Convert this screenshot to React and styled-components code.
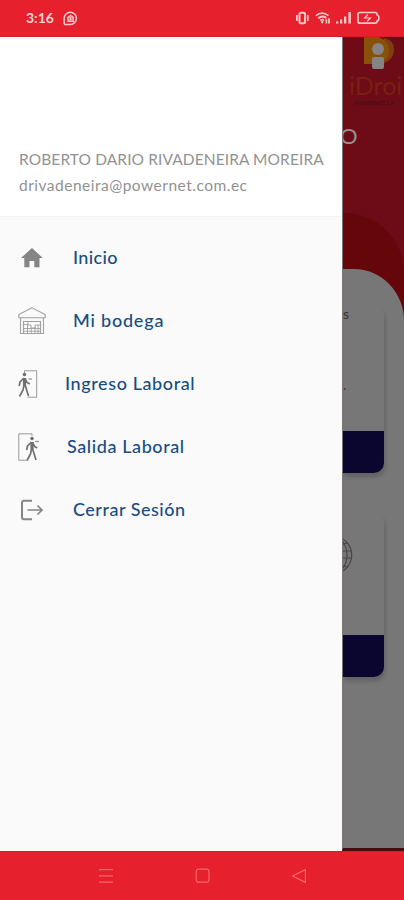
import React from 'react'
import styled, { createGlobalStyle } from 'styled-components'

const menu = [
  { label: 'Inicio', icon: <HomeIcon />, indent: 73, spacing: 0.35 },
  { label: 'Mi bodega', icon: <WarehouseIcon />, indent: 73, spacing: 0.8 },
  { label: 'Ingreso Laboral', icon: <EnterIcon />, indent: 65, spacing: 0.6 },
  { label: 'Salida Laboral', icon: <ExitIcon />, indent: 67, spacing: 0.6 },
  { label: 'Cerrar Sesión', icon: <LogoutIcon />, indent: 73, spacing: 0.5 },
]

function App() {
  return (
    <Screen>
      <GlobalStyle />
      <StatusBar />
      <Content>
        <Drawer>
          <Profile>
            <Name>ROBERTO DARIO RIVADENEIRA MOREIRA</Name>
            <Email>drivadeneira@powernet.com.ec</Email>
          </Profile>
          <Menu>
            {menu.map((item) => (
              <MenuItem key={item.label}>
                <IconBox $width={item.indent}>{item.icon}</IconBox>
                <Label $spacing={item.spacing}>{item.label}</Label>
              </MenuItem>
            ))}
          </Menu>
        </Drawer>
        <Dashboard />
      </Content>
      <NavigationBar />
    </Screen>
  )
}

function StatusBar() {
  return (
    <StatusBarStyled>
      <Clock>3:16</Clock>
      <svg width="15" height="15" viewBox="0 0 15 15" fill="none" stroke="#ffc9ca" strokeWidth="1.5">
        <path d="M1.2 13.2V7.3a6.1 6.1 0 1 1 6.1 6.1H1.2" />
        <path d="M5 10.3V6.4l2.6-2 2.5 2v3.9z" />
        <path d="M7.5 5.8v3.8" strokeWidth="2" />
      </svg>
      <StatusIcons>
        <svg width="14" height="14" viewBox="0 0 14 14" fill="none" stroke="#ffc9ca">
          <rect x="3.5" y="1.8" width="5.6" height="10.4" rx="1.5" strokeWidth="2" />
          <path d="M.9 4v6M11.8 4v6" strokeWidth="1.7" />
        </svg>
        <svg width="16" height="14" viewBox="0 0 16 14" fill="none" stroke="#ffc9ca" strokeWidth="1.8">
          <path d="M1 4.6q6-4.8 12.4 0M3.2 7.2q4.2-3.4 8.2-.2M5.3 9.4q2-1.6 3.6-.1" />
          <path d="M7.2 10v2.2" strokeWidth="2" />
          <path d="M11.4 12.5V8.2M14 7.2v5.3" strokeWidth="1.7" />
        </svg>
        <svg width="16" height="14" viewBox="0 0 16 14" fill="#ffc9ca">
          <path d="M0 10.5h2.3v2H0zM4 8.5h2.3v4H4zM8 5.5h2.3v7H8zM12.4 1h2.5v11.5h-2.5z" />
        </svg>
        <svg width="24" height="14" viewBox="0 0 24 14" fill="none" stroke="#ffc9ca" strokeWidth="1.7">
          <path d="M3 1.5h15q2 0 2 2.2 2 .7 2 3.2t-2 3.2q0 2.1-2 2.1H3q-2 0-2-2V3.5q0-2 2-2z" />
          <path d="M11 3.5 7.5 7h6L10 10.5" strokeWidth="1.1" />
        </svg>
      </StatusIcons>
    </StatusBarStyled>
  )
}

function Dashboard() {
  return (
    <DashboardStyled>
      <Hero>
        <svg width="30" height="33" viewBox="0 0 30 33">
          <path d="M0 0h18q12 3 12 12 0 11-10 14V0z" fill="#7d3f12" />
          <path d="M0 0h15q10 4 10 13t-6 11v3H0z" fill="#895108" />
          <circle cx="14" cy="12" r="6" fill="#878283" />
          <rect x="8" y="20" width="12" height="12" rx="2" fill="#878283" />
        </svg>
        <Brand>iDroi</Brand>
        <Tagline>POWERNET S.A</Tagline>
        <Title>O</Title>
      </Hero>
      <Wave>
        <Panel>
          <Card $height={168}>
            <CardText $height={71}>s</CardText>
            <CardText $height={55}>.</CardText>
            <CardFooter />
          </Card>
          <Card $height={165}>
            <CardPicture>
              <svg width="10" height="38" viewBox="20 0 10 38" fill="none" stroke="#484848" strokeWidth="1.2">
                <circle cx="10" cy="19" r="18.7" />
                <ellipse cx="10" cy="19" rx="14" ry="18.7" />
                <path d="M10 9q9 0 15-2.5M10 15h19M10 22h19M10 29q9 0 15 2.5" />
              </svg>
            </CardPicture>
            <CardFooter />
          </Card>
        </Panel>
      </Wave>
    </DashboardStyled>
  )
}

function NavigationBar() {
  return (
    <NavigationBarStyled>
      <svg width="16" height="16" viewBox="0 0 16 16" stroke="#f7666b" strokeWidth="1.2">
        <path d="M1 1.6h14M1 7.8h14M1 14.2h14" />
      </svg>
      <svg width="16" height="16" viewBox="0 0 16 16" fill="none" stroke="#f7666b" strokeWidth="1.2">
        <rect x="1.2" y="1.2" width="12.8" height="13" rx="2.5" />
      </svg>
      <svg width="16" height="16" viewBox="0 0 16 16" fill="none" stroke="#f7666b" strokeWidth="1.2" strokeLinejoin="round">
        <path d="M14.4 1.6v12.8L1.5 8z" />
      </svg>
    </NavigationBarStyled>
  )
}

function HomeIcon() {
  return (
    <svg width="27" height="28" viewBox="0 0 27 28" fill="#858585">
      <path d="M14 4 3 14h3.3v9.3h5.2V17h4.8v6.3h5.2V14h3.3z" />
    </svg>
  )
}

function WarehouseIcon() {
  return (
    <svg width="28" height="28" viewBox="0 0 28 28" fill="none" stroke="#a0a0a0" strokeWidth="1.1">
      <path d="M14 .8.8 7.5v3.3h26.4V7.5z" />
      <path d="M2.5 11v15.5h23V11M5.5 26.5v-12h17v12" />
      <path d="M6 17.5h4v-3M10 18h3v3h4v-3h5M6 21.5h16M6 24.2h16M9.5 18v8M13.3 21v5M17 20v6M20 18v8" strokeWidth=".9" />
    </svg>
  )
}

function Walker() {
  return (
    <g stroke="#707070">
      <circle cx="6.5" cy="4.5" r="1.8" fill="#707070" stroke="none" />
      <path d="M6.5 8v7" strokeWidth="3.2" />
      <path d="m6 8-4 4-.8 4M7 8.5l2 4 2.8 1.5M6 15l-1 5-3.5 6.5M7 14.5l1.5 5 2 6.5" strokeWidth="1.7" fill="none" />
    </g>
  )
}

function EnterIcon() {
  return (
    <svg width="20" height="28" viewBox="0 0 20 28" fill="none">
      <path d="M6.5 3V.8h12.2v26.4H9.5" stroke="#999" />
      <path d="M10.5 9h3.6" stroke="#999" strokeWidth="1.3" />
      <Walker />
    </svg>
  )
}

function ExitIcon() {
  return (
    <svg width="22" height="28" viewBox="0 0 22 28" fill="none">
      <path d="M14 3V.8H.8v26.4h8" stroke="#999" />
      <path d="M17 8.5h4" stroke="#999" strokeWidth="1.3" />
      <g transform="translate(7.5 1)">
        <Walker />
      </g>
    </svg>
  )
}

function LogoutIcon() {
  return (
    <svg width="26" height="24" viewBox="0 0 26 24" fill="none" stroke="#858585">
      <path d="M14 2.8H6Q4 2.8 4 5v14q0 2.2 2 2.2h8" strokeWidth="2" />
      <path d="M9.5 12h14.3M19.5 7.5 24 12l-4.5 4.5" strokeWidth="1.7" />
    </svg>
  )
}

const GlobalStyle = createGlobalStyle`
    * {
        box-sizing: border-box;
    }
    body {
        margin: 0;
        font-family: Lato, "Liberation Sans", sans-serif;
    }
    svg {
        display: block;
        flex-shrink: 0;
    }
`;

const Screen = styled.div`
    display: flex;
    flex-direction: column;
    width: 404px;
    height: 900px;
    overflow: hidden;
    background: #e6202d;
`;

const StatusBarStyled = styled.header`
    display: flex;
    align-items: center;
    flex-shrink: 0;
    height: 37px;
    padding: 0 23px 0 26px;
    border-bottom: 1px solid #d5202b;
`;

const Clock = styled.span`
    width: 37px;
    padding-bottom: 1px;
    color: #ffd5d5;
    font-size: 14px;
    font-weight: 700;
`;

const StatusIcons = styled.div`
    display: flex;
    gap: 5px;
    margin-left: auto;
`;

const Content = styled.main`
    display: grid;
    grid-template-columns: 342px 62px;
    flex: 1;
    min-height: 0;
`;

const Drawer = styled.aside`
    background: #fafafa;
`;

const Profile = styled.div`
    display: flex;
    flex-direction: column;
    height: 180px;
    padding: 111px 0 0 19px;
    background: #fff;
    border-bottom: 1px solid #f3f3f3;
    color: #929292;
    white-space: nowrap;
`;

const Name = styled.div`
    font-size: 15.5px;
    line-height: 22px;
    letter-spacing: 0.1px;
`;

const Email = styled.div`
    margin-top: 4px;
    font-size: 15.5px;
    line-height: 22px;
    letter-spacing: 0.5px;
`;

const Menu = styled.nav`
    padding-top: 9px;
`;

const MenuItem = styled.div`
    display: flex;
    align-items: center;
    height: 63px;
`;

const IconBox = styled.div`
    width: ${({ $width }) => $width}px;
    padding-left: 18px;
`;

const Label = styled.span`
    padding-bottom: 2px;
    color: #174d82;
    font-size: 18px;
    font-weight: 500;
    letter-spacing: ${({ $spacing }) => $spacing}px;
    white-space: nowrap;
`;

const DashboardStyled = styled.section`
    display: flex;
    flex-direction: column;
    overflow: hidden;
    background: #6d0b17;
    border-left: 1px solid #7c7474;
    border-bottom: 3px solid #4e0711;
`;

const Hero = styled.div`
    display: flex;
    flex-direction: column;
    flex-shrink: 0;
    height: 176px;

    > svg {
        margin-left: 21px;
    }
`;

const Brand = styled.div`
    padding-left: 6px;
    color: #7a1f12;
    font-size: 25px;
    line-height: 30px;
    white-space: nowrap;
`;

const Tagline = styled.div`
    padding: 0 0 1px 11px;
    color: #41121b;
    font-size: 5.5px;
    font-weight: 700;
    line-height: 7px;
    white-space: nowrap;
`;

const Title = styled.div`
    margin: 15px 0 0 -3px;
    color: #969092;
    font-size: 22px;
    line-height: 26px;
`;

const Wave = styled.div`
    display: flex;
    flex: 1;
    padding-top: 56px;
    background: #64060a;
    border-radius: 0 60px 0 0;
`;

const Panel = styled.div`
    flex: 1;
    padding: 36px 20px 0 0;
    background: #777;
    border-radius: 0 50px 0 0 / 0 52px 0 0;
`;

const Card = styled.div`
    display: flex;
    flex-direction: column;
    height: ${({ $height }) => $height}px;
    margin-bottom: 39px;
    border-radius: 0 10px 10px 0;
    background: #777;
    box-shadow: 1px 4px 4px rgba(0, 0, 0, 0.18);
`;

const CardText = styled.div`
    height: ${({ $height }) => $height}px;
    color: #333;
    font-size: 14px;
    line-height: 17px;
`;

const CardPicture = styled.div`
    flex: 1;
    padding-top: 24px;
`;

const CardFooter = styled.div`
    height: 42px;
    background: #0b062f;
    border-radius: 0 0 10px 0;
`;

const NavigationBarStyled = styled.footer`
    display: flex;
    justify-content: space-between;
    flex-shrink: 0;
    height: 49px;
    padding: 16px 97px 0 98px;
    border-top: 1px solid #d5202b;
`;

export default App
